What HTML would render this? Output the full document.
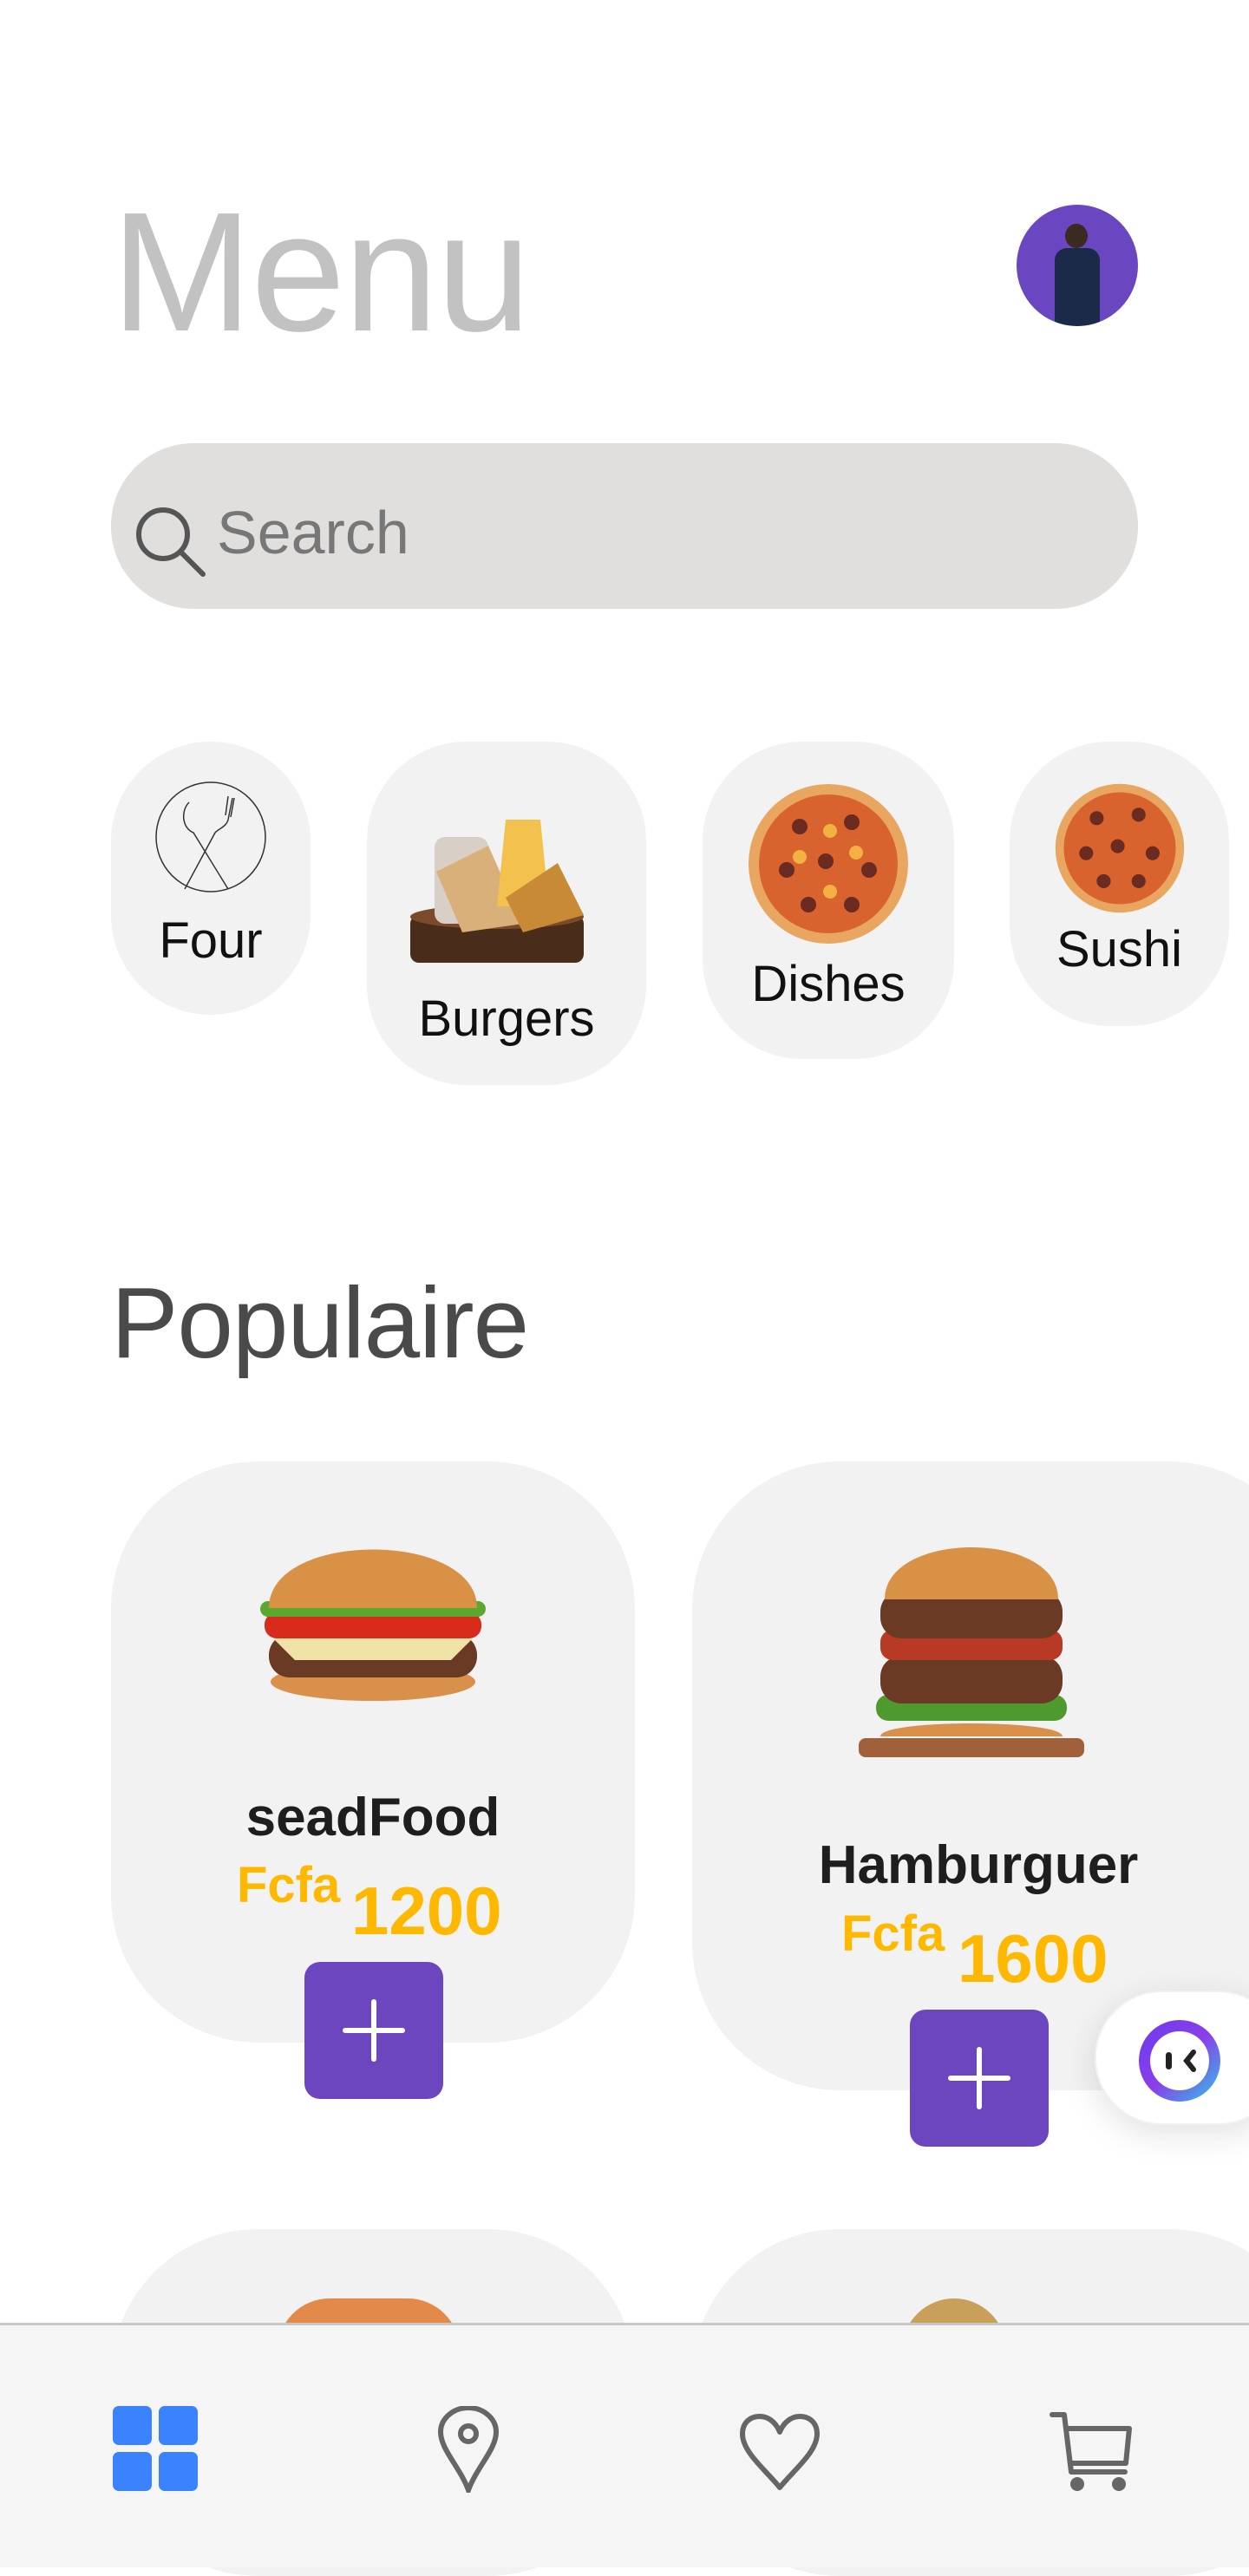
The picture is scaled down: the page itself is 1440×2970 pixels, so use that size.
<!DOCTYPE html>
<html><head><meta charset="utf-8"><style>
*{margin:0;padding:0;box-sizing:border-box}
body{width:1440px;height:2960px;background:#fff;font-family:"Liberation Sans",sans-serif;position:relative;overflow:hidden}
.a{position:absolute}
.chip{position:absolute;background:#f2f2f2;border-radius:115px;text-align:center}
.chip span{position:absolute;left:0;right:0;font-size:58px;color:#111}
.card{position:absolute;background:#f2f2f2;border-radius:170px}
.name{position:absolute;text-align:center;font-weight:bold;font-size:62px;color:#1e1e1e}
.price{position:absolute;text-align:center;color:#ffb800;font-weight:bold}
.btn{position:absolute;width:160px;height:158px;background:#6b46bf;border-radius:18px}
.btn:before{content:"";position:absolute;left:44px;top:76px;width:72px;height:6px;background:#fff;border-radius:3px}
.btn:after{content:"";position:absolute;left:77px;top:43px;width:6px;height:72px;background:#fff;border-radius:3px}
</style></head><body>
<div class="a" style="left:128px;top:216px;font-size:196px;color:#c2c2c2;letter-spacing:-2px;line-height:1">Menu</div>
<div class="a" style="left:1172px;top:236px;width:140px;height:140px;border-radius:50%;background:#6b46c1;overflow:hidden">
<div class="a" style="left:56px;top:22px;width:26px;height:28px;border-radius:50%;background:#3a2a20"></div>
<div class="a" style="left:44px;top:50px;width:52px;height:90px;border-radius:14px 14px 0 0;background:#1c2a4a"></div>
</div>
<div class="a" style="left:128px;top:511px;width:1184px;height:191px;border-radius:95px;background:#e0dfdd"></div>
<svg class="a" style="left:152px;top:580px" width="90" height="90" viewBox="0 0 90 90"><circle cx="36" cy="36" r="28" fill="none" stroke="#555" stroke-width="6"/><line x1="57" y1="57" x2="82" y2="82" stroke="#555" stroke-width="6" stroke-linecap="round"/></svg>
<div class="a" style="left:250px;top:574px;font-size:70px;color:#777">Search</div>

<div class="chip" style="left:128px;top:855px;width:230px;height:315px">
<svg class="a" style="left:50px;top:45px" width="130" height="130" viewBox="0 0 130 130" fill="none" stroke="#333" stroke-width="1.5"><circle cx="65" cy="65" r="63"/><path d="M40 25c-10 10-8 30 5 35l40 65M90 20l-5 25c-2 8-10 10-15 15l-35 65M85 18l-3 22M92 20l-4 22"/></svg>
<span style="top:196px">Four</span></div>
<div class="chip" style="left:423px;top:855px;width:322px;height:396px">
<svg class="a" style="left:50px;top:70px" width="210" height="190" viewBox="0 0 210 190"><rect x="0" y="130" width="200" height="55" rx="10" fill="#4a2c1a"/><ellipse cx="100" cy="132" rx="100" ry="14" fill="#7a4a2a"/><rect x="28" y="40" width="62" height="100" rx="12" fill="#d8cfc6"/><path d="M30 80l60-30 40 90-70 10z" fill="#d9b07a"/><path d="M110 20h40l10 100h-60z" fill="#f2c14e"/><path d="M110 110l60-40 30 60-70 20z" fill="#c98a36"/></svg>
<span style="top:286px">Burgers</span></div>
<div class="chip" style="left:810px;top:855px;width:290px;height:366px">
<svg class="a" style="left:52px;top:48px" width="186" height="186" viewBox="0 0 186 186"><circle cx="93" cy="93" r="92" fill="#e9a661"/><circle cx="93" cy="93" r="80" fill="#d9632e"/><g fill="#6b2b20"><circle cx="60" cy="50" r="9"/><circle cx="120" cy="45" r="9"/><circle cx="45" cy="100" r="9"/><circle cx="140" cy="100" r="9"/><circle cx="90" cy="90" r="9"/><circle cx="70" cy="140" r="9"/><circle cx="120" cy="140" r="9"/></g><g fill="#f2b142"><circle cx="95" cy="55" r="8"/><circle cx="60" cy="85" r="8"/><circle cx="125" cy="80" r="8"/><circle cx="95" cy="125" r="8"/></g></svg>
<span style="top:246px">Dishes</span></div>
<div class="chip" style="left:1164px;top:855px;width:253px;height:328px">
<svg class="a" style="left:52px;top:48px" width="150" height="150" viewBox="0 0 186 186"><circle cx="93" cy="93" r="92" fill="#e9a661"/><circle cx="93" cy="93" r="80" fill="#d9632e"/><g fill="#6b2b20"><circle cx="60" cy="50" r="10"/><circle cx="120" cy="45" r="10"/><circle cx="45" cy="100" r="10"/><circle cx="140" cy="100" r="10"/><circle cx="90" cy="90" r="10"/><circle cx="70" cy="140" r="10"/><circle cx="120" cy="140" r="10"/></g></svg>
<span style="top:206px">Sushi</span></div>

<div class="a" style="left:128px;top:1458px;font-size:116px;color:#4a4a4a;letter-spacing:-1px">Populaire</div>

<div class="card" style="left:128px;top:1685px;width:604px;height:670px"></div>
<svg class="a" style="left:270px;top:1764px" width="320" height="200" viewBox="0 0 320 200"><ellipse cx="160" cy="175" rx="118" ry="22" fill="#d9904a"/><rect x="40" y="120" width="240" height="50" rx="24" fill="#6b3a24"/><path d="M40 120h240l-30 30H70z" fill="#f1e3a8"/><rect x="35" y="95" width="250" height="30" rx="14" fill="#d92b1c"/><rect x="30" y="82" width="260" height="18" rx="9" fill="#5aa830"/><path d="M40 90c0-90 240-90 240 0z" fill="#d99145"/></svg>
<div class="name" style="left:128px;width:604px;top:2060px">seadFood</div>
<div class="price" style="left:273px;top:2140px;font-size:58px">Fcfa</div>
<div class="price" style="left:405px;top:2158px;font-size:78px">1200</div>
<div class="btn" style="left:351px;top:2262px"></div>

<div class="card" style="left:798px;top:1685px;width:720px;height:725px"></div>
<svg class="a" style="left:985px;top:1774px" width="270" height="256" viewBox="0 0 270 256"><rect x="5" y="230" width="260" height="22" rx="8" fill="#a0603a"/><path d="M30 228c0-20 210-20 210 0z" fill="#d9904a"/><rect x="25" y="180" width="220" height="30" rx="14" fill="#4f9a2e"/><rect x="30" y="135" width="210" height="55" rx="24" fill="#6b3a24"/><rect x="30" y="105" width="210" height="35" rx="14" fill="#b83a26"/><rect x="30" y="60" width="210" height="55" rx="24" fill="#6b3a24"/><path d="M35 70c0-80 200-80 200 0z" fill="#d99145"/></svg>
<div class="name" style="left:798px;width:660px;top:2115px">Hamburguer</div>
<div class="price" style="left:970px;top:2196px;font-size:58px">Fcfa</div>
<div class="price" style="left:1104px;top:2213px;font-size:78px">1600</div>
<div class="btn" style="left:1049px;top:2317px"></div>

<div class="a" style="left:1262px;top:2295px;width:220px;height:155px;border-radius:78px;background:#fff;box-shadow:0 10px 40px rgba(0,0,0,.12);border:2px solid #f2f2f2"></div>
<svg class="a" style="left:1312px;top:2328px" width="96" height="96" viewBox="0 0 96 96"><defs><linearGradient id="g" x1="0" y1="0" x2="1" y2="1"><stop offset="0" stop-color="#6a3cf0"/><stop offset=".5" stop-color="#8b3ee8"/><stop offset="1" stop-color="#2fc6e6"/></linearGradient></defs><circle cx="48" cy="48" r="47" fill="url(#g)"/><circle cx="48" cy="48" r="34" fill="#fff"/><rect x="32" y="38" width="7" height="20" rx="3.5" fill="#222"/><path d="M64 38l-8 10 8 10" fill="none" stroke="#222" stroke-width="6" stroke-linecap="round"/></svg>

<div class="card" style="left:128px;top:2570px;width:604px;height:400px"></div>
<div class="card" style="left:798px;top:2570px;width:720px;height:400px"></div>
<div class="a" style="left:320px;top:2650px;width:210px;height:60px;border-radius:105px 105px 0 0;background:#e38a4a"></div>
<div class="a" style="left:1040px;top:2650px;width:120px;height:60px;border-radius:60px 60px 0 0;background:#c9a05a"></div>

<div class="a" style="left:0;top:2678px;width:1440px;height:282px;background:#f5f5f5;border-top:3px solid #c8c8c8"></div>
<svg class="a" style="left:130px;top:2774px" width="98" height="98" viewBox="0 0 98 98" fill="#3b82ff"><rect x="0" y="0" width="45" height="45" rx="7"/><rect x="53" y="0" width="45" height="45" rx="7"/><rect x="0" y="53" width="45" height="45" rx="7"/><rect x="53" y="53" width="45" height="45" rx="7"/></svg>
<svg class="a" style="left:500px;top:2774px" width="80" height="100" viewBox="0 0 80 100" fill="none" stroke="#666" stroke-width="6"><path d="M40 97C30 70 8 50 8 30a32 28 0 0 1 64 0c0 20-22 40-32 67z"/><circle cx="40" cy="32" r="9"/></svg>
<svg class="a" style="left:852px;top:2782px" width="94" height="90" viewBox="0 0 94 90" fill="none" stroke="#666" stroke-width="6" stroke-linejoin="round"><path d="M47 86C30 65 4 45 4 24 4 12 12 4 24 4c12 0 20 10 23 18 3-8 11-18 23-18 12 0 20 8 20 20 0 21-26 41-43 62z"/></svg>
<svg class="a" style="left:1210px;top:2780px" width="96" height="94" viewBox="0 0 96 94" fill="none" stroke="#666" stroke-width="6" stroke-linecap="round" stroke-linejoin="round"><path d="M3 4h14l8 66h62M20 20h72l-4 40H24"/><circle cx="32" cy="84" r="5" fill="#666"/><circle cx="80" cy="84" r="5" fill="#666"/></svg>
</body></html>
